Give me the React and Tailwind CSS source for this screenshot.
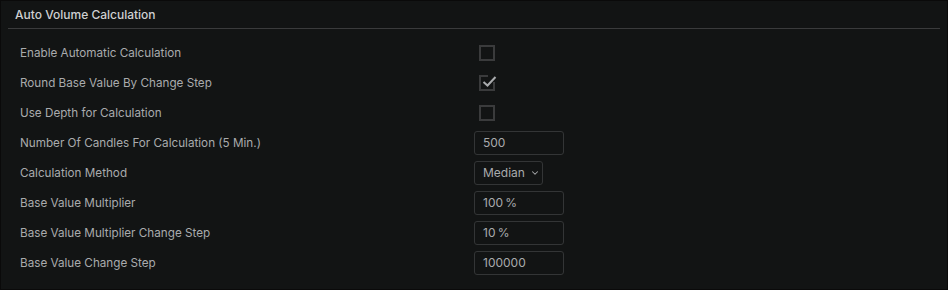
import { ChevronDown } from 'lucide-react';

const rows = [
  { label: 'Enable Automatic Calculation', type: 'check', checked: false },
  { label: 'Round Base Value By Change Step', type: 'check', checked: true },
  { label: 'Use Depth for Calculation', type: 'check', checked: false },
  { label: 'Number Of Candles For Calculation (5 Min.)', type: 'input', value: '500' },
  { label: 'Calculation Method', type: 'select', value: 'Median' },
  { label: 'Base Value Multiplier', type: 'input', value: '100\u2009%' },
  { label: 'Base Value Multiplier Change Step', type: 'input', value: '10\u2009%' },
  { label: 'Base Value Change Step', type: 'input', value: '100000' },
];

const Checkbox = ({ checked }) => (
  <div className="relative ml-[5px] w-[16px] h-[16px] border-2 border-[#3a3b3c]">
    {checked && (
      <>
        <div className="absolute -top-[2px] -right-[2px] w-[7px] h-[7px] bg-[#121414]" />
        <svg className="absolute -top-[3px] left-[1px]" width="16" height="14" viewBox="0 0 16 14">
          <path d="M1.5 8 L5.5 11.5 L13.5 3" fill="none" stroke="#a9abad" strokeWidth="2" />
        </svg>
      </>
    )}
  </div>
);

const Control = ({ row }) => {
  if (row.type === 'check') return <Checkbox checked={row.checked} />;
  if (row.type === 'select')
    return (
      <div className="w-[69px] h-[24px] border border-[#333536] rounded-[3px] flex items-center pl-[8px] gap-[5px] text-[12px] text-[#a9abad]">
        <span>{row.value}</span>
        <ChevronDown className="w-[10px] h-[10px] text-[#a9abad]" strokeWidth={2.5} />
      </div>
    );
  return (
    <div className="w-[90px] h-[24px] border border-[#333536] rounded-[3px] flex items-center pl-[8px] text-[12px] text-[#a9abad]">
      {row.value}
    </div>
  );
};

export default function App() {
  return (
    <div
      className="w-[948px] h-[290px] bg-[#121414] border border-[#0a0a0a] flex flex-col"
      style={{ fontFamily: 'Inter, "Noto Sans", sans-serif' }}
    >
      <div className="h-[27px] flex items-center pl-[14px] text-[12px] font-medium text-[#cfd0d1]">
        Auto Volume Calculation
      </div>
      <div className="mx-[7px] h-px bg-[#3a3b3c]" />
      <div className="flex flex-col pt-[9px] pl-[19px]">
        {rows.map((row) => (
          <div key={row.label} className="h-[30px] flex items-center">
            <div className="w-[454px] pt-[1px] text-[11.7px] text-[#a9abad]">{row.label}</div>
            <Control row={row} />
          </div>
        ))}
      </div>
    </div>
  );
}
